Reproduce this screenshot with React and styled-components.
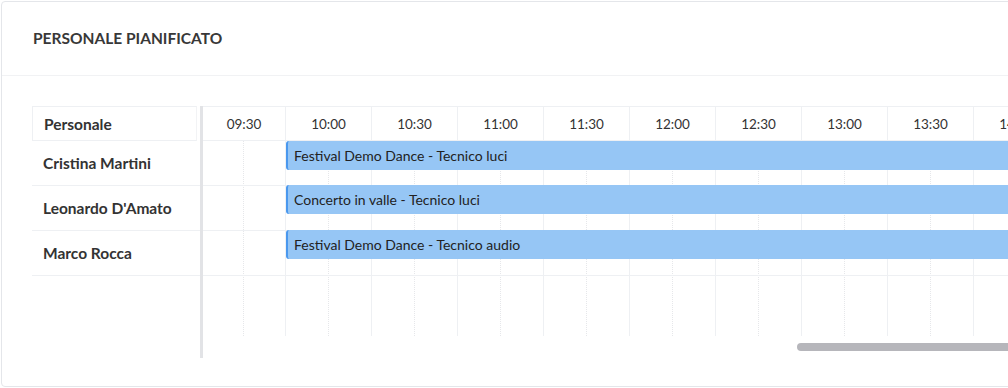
import React from 'react'
import styled, { createGlobalStyle } from 'styled-components'

const GlobalStyle = createGlobalStyle`
    html, body {
        margin: 0;
        padding: 0;
        overflow: hidden;
        background: #ffffff;
    }
    body {
        font-family: Lato, "Liberation Sans", sans-serif;
        color: #333;
    }
`

const SLOT_W = 86
const FIRST_W = 83

const slots = ['09:30', '10:00', '10:30', '11:00', '11:30', '12:00', '12:30', '13:00', '13:30', '14:00', '14:30', '15:00']

const staff = [
    { name: 'Cristina Martini', event: 'Festival Demo Dance - Tecnico luci', start: 1 },
    { name: "Leonardo D'Amato", event: 'Concerto in valle - Tecnico luci', start: 1 },
    { name: 'Marco Rocca', event: 'Festival Demo Dance - Tecnico audio', start: 1 },
]

const slotLeft = (i) => (i === 0 ? 0 : FIRST_W + (i - 1) * SLOT_W)

const Page = styled.div`
    padding: 1px 0 0 1px;
`

const Card = styled.section`
    width: 1100px;
    border: 1px solid #e4e6ea;
    border-radius: 4px;
    background: #fff;
`

const CardHeader = styled.header`
    padding: 26px 31px;
    border-bottom: 1px solid #f1f2f4;
`

const Title = styled.h2`
    margin: 0;
    font-size: 15.5px;
    line-height: 21px;
    font-weight: 700;
    color: #383838;
`

const CardBody = styled.div`
    padding: 30px 30px 28px;
`

const Calendar = styled.div`
    display: flex;
    align-items: stretch;
`

const ResourcePane = styled.div`
    width: 168px;
    flex: none;
    display: flex;
    flex-direction: column;
`

const ResourceHead = styled.div`
    height: 33px;
    display: flex;
    align-items: center;
    padding-left: 11px;
    border: 1px solid #eef0f3;
    border-right-color: #f2f3f5;
    margin-right: 3px;
    font-size: 15.5px;
    font-weight: 700;
    color: #333;
`

const ResourceRow = styled.div`
    height: 45px;
    box-sizing: border-box;
    display: flex;
    align-items: center;
    padding-left: 11px;
    border-bottom: 1px solid #eef0f3;
    font-size: 15.5px;
    font-weight: 700;
    color: #333;
`

const Divider = styled.div`
    width: 3px;
    flex: none;
    background: #e2e3e6;
`

const TimePane = styled.div`
    flex: 1;
    overflow: hidden;
    display: flex;
    flex-direction: column;
`

const HeadRow = styled.div`
    display: flex;
    height: 33px;
    border-top: 1px solid #eef0f3;
    border-bottom: 1px solid #eef0f3;
`

const HeadCell = styled.div`
    width: ${(p) => p.$w}px;
    flex: none;
    box-sizing: border-box;
    border-right: 1px solid #eef0f3;
    display: flex;
    align-items: center;
    justify-content: center;
    font-size: 13.5px;
    color: #333;
`

const Stack = styled.div`
    display: grid;
`

const Columns = styled.div`
    grid-area: 1 / 1;
    display: flex;
    height: 195px;
`

const Column = styled.div`
    width: ${(p) => p.$w}px;
    flex: none;
    box-sizing: border-box;
    border-right: 1px solid #eef0f3;
    display: flex;
    justify-content: flex-end;
    &::before {
        content: '';
        width: 0;
        border-left: 1px dotted #e6e7ea;
        margin-right: ${(p) => p.$half}px;
    }
`

const Lanes = styled.div`
    grid-area: 1 / 1;
    display: flex;
    flex-direction: column;
`

const Lane = styled.div`
    height: 45px;
    box-sizing: border-box;
    border-bottom: 1px solid #eef0f3;
    display: flex;
    align-items: flex-start;
    &:not(:first-child) {
        margin-top: -1px;
        height: 46px;
    }
`

const Event = styled.div`
    height: 29px;
    box-sizing: border-box;
    flex: none;
    display: flex;
    align-items: center;
    padding-left: 6px;
    background: #96c6f5;
    border-left: 2px solid #4a98ee;
    border-radius: 3px 0 0 3px;
    font-size: 14px;
    color: #222;
    white-space: nowrap;
`

const ScrollArea = styled.div`
    height: 22px;
    display: flex;
    align-items: center;
`

const Thumb = styled.div`
    margin-left: 594px;
    width: 400px;
    height: 8px;
    border-radius: 4px;
    background: #b6b6bb;
`

export default function App() {
    const total = FIRST_W + (slots.length - 1) * SLOT_W
    return (
        <Page>
            <GlobalStyle />
            <Card>
                <CardHeader>
                    <Title>PERSONALE PIANIFICATO</Title>
                </CardHeader>
                <CardBody>
                    <Calendar>
                        <ResourcePane>
                            <ResourceHead>Personale</ResourceHead>
                            {staff.map((s) => (
                                <ResourceRow key={s.name}>{s.name}</ResourceRow>
                            ))}
                        </ResourcePane>
                        <Divider />
                        <TimePane>
                            <HeadRow>
                                {slots.map((t, i) => (
                                    <HeadCell key={t} $w={i === 0 ? FIRST_W : SLOT_W}>{t}</HeadCell>
                                ))}
                            </HeadRow>
                            <Stack>
                                <Columns>
                                    {slots.map((t, i) => (
                                        <Column key={t} $w={i === 0 ? FIRST_W : SLOT_W} $half={i === 0 ? 41 : 42} />
                                    ))}
                                </Columns>
                                <Lanes>
                                    {staff.map((s) => (
                                        <Lane key={s.name}>
                                            <Event style={{ marginLeft: slotLeft(s.start), width: total - slotLeft(s.start) }}>
                                                {s.event}
                                            </Event>
                                        </Lane>
                                    ))}
                                </Lanes>
                            </Stack>
                            <ScrollArea>
                                <Thumb />
                            </ScrollArea>
                        </TimePane>
                    </Calendar>
                </CardBody>
            </Card>
        </Page>
    )
}
